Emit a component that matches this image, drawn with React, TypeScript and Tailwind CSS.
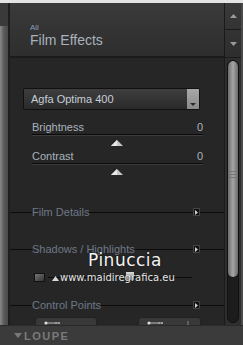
import React from "react";

const Triangle = () => (
  <svg width="12" height="6" viewBox="0 0 12 6" className="block">
    <path d="M6 0 L12 6 L0 6 Z" fill="#c8c8c8" />
    <path d="M6 0 L6 6 L0 6 Z" fill="#e8e8e8" />
  </svg>
);

const ExpandBtn = () => (
  <div className="w-[7px] h-[8px] bg-[#111] border border-[#444] flex items-center justify-center">
    <svg width="3" height="5" viewBox="0 0 3 5">
      <path d="M0 0 L3 2.5 L0 5 Z" fill="#d0d0d0" />
    </svg>
  </div>
);

const SectionRow = ({ label, className }: { label: string; className?: string }) => (
  <div className={`flex items-center h-[12px] ${className ?? ""}`}>
    <div className="w-[22px] h-px bg-[#0c0c0c]" />
    <span className="text-[11px] leading-[12px] text-[#6e7886] whitespace-nowrap">{label}</span>
    <div className="flex-1 h-px bg-[#0c0c0c]" />
    <ExpandBtn />
    <div className="w-[24px] h-px bg-[#0c0c0c]" />
  </div>
);

const SliderBlock = ({ label, className }: { label: string; className?: string }) => (
  <div className={`ml-[22px] w-[171px] ${className ?? ""}`}>
    <div className="flex justify-between h-[12px] text-[11px] leading-[12px] text-[#a9b3be]">
      <span>{label}</span>
      <span>0</span>
    </div>
    <div className="mt-[1px] h-[2px] border-t border-[#0b0b0b] border-b border-b-[#3c3c3c]" />
    <div className="mt-[4px] ml-[79px]">
      <Triangle />
    </div>
  </div>
);

export default function App() {
  return (
    <div
      className="relative w-[243px] h-[345px] overflow-hidden flex flex-col bg-[#262626]"
      style={{ fontFamily: '"Liberation Sans", Arial, sans-serif' }}
    >
      {/* top strip */}
      <div className="h-[3px] shrink-0 bg-[#e4e4e4]" />

      <div className="flex flex-1 min-h-0 overflow-hidden">
        {/* LEFT EDGE */}
        <div className="w-[10px] shrink-0 flex flex-col">
          <div className="h-[23px] shrink-0 bg-[#3a3a3a] border-r-2 border-[#1e1e1e]" />
          <div className="flex-1 bg-gradient-to-r from-[#8a8a8a] via-[#5a5a5a] to-[#4a4a4a] border-r-2 border-[#1e1e1e]" />
        </div>

        {/* MAIN PANEL */}
        <div className="flex-1 flex flex-col min-w-0">
          {/* HEADER */}
          <div className="h-[55px] shrink-0 bg-gradient-to-b from-[#3a3a3a] to-[#2e2e2e] border-b-2 border-[#1b1b1b] pl-[20px] pt-[20px]">
            <div className="text-[8px] leading-[9px] text-[#8a9bb4]">All</div>
            <div className="text-[14px] leading-[16px] text-[#a9b1bc]">Film Effects</div>
          </div>

          {/* BODY */}
          <div className="flex-1 min-h-0 overflow-hidden">
            {/* DROPDOWN */}
            <div className="mt-[30px] ml-[13px] w-[177px] h-[22px] flex border border-[#111] rounded-[2px] bg-gradient-to-b from-[#3e3e3e] to-[#2a2a2a]">
              <span className="flex-1 pl-[7px] text-[11px] leading-[20px] text-[#c6ced7]">Agfa Optima 400</span>
              <div className="w-[12px] bg-gradient-to-b from-[#a8a8a8] to-[#8a8a8a] flex items-end justify-center pb-[3px]">
                <svg width="6" height="3" viewBox="0 0 6 3">
                  <path d="M0 0 L6 0 L3 3 Z" fill="#2a2a2a" />
                </svg>
              </div>
            </div>

            <SliderBlock label="Brightness" className="mt-[11px]" />
            <SliderBlock label="Contrast" className="mt-[4px]" />

            <SectionRow label="Film Details" className="mt-[31px]" />
            <SectionRow label="Shadows / Highlights" className="mt-[25px]" />

            {/* slider row */}
            <div className="mt-[17px] h-[10px] flex items-center ml-[24px] w-[158px] relative">
              <div className="w-[11px] h-[9px] border border-[#111] bg-gradient-to-br from-[#777] to-[#333]" />
              <div className="flex-1 h-px bg-[#0c0c0c] ml-[3px]" />
              <div className="absolute left-[92px] top-0 w-[8px] h-[8px] bg-gradient-to-b from-[#ddd] to-[#888]" />
            </div>

            <SectionRow label="Control Points" className="mt-[17px]" />

            {/* buttons */}
            <div className="mt-[6px] flex ml-[25px] gap-[41px]">
              <div className="w-[62px] h-[14px] rounded-t-[3px] bg-[#383838] border border-[#222] pl-[8px] pt-[3px]">
                <svg width="18" height="4" viewBox="0 0 18 4">
                  <circle cx="2" cy="2" r="1.6" fill="#ddd" />
                  <path d="M3 2 H16 M12 1 V3 M15 1 V3" stroke="#bbb" strokeWidth="1" />
                </svg>
              </div>
              <div className="w-[63px] h-[14px] rounded-t-[3px] bg-[#383838] border border-[#222] pl-[8px] pt-[3px] flex justify-between pr-[10px]">
                <svg width="18" height="4" viewBox="0 0 18 4">
                  <circle cx="2" cy="2" r="1.6" fill="#ddd" />
                  <path d="M3 2 H16 M12 1 V3 M15 1 V3" stroke="#bbb" strokeWidth="1" />
                </svg>
                <svg width="4" height="4" viewBox="0 0 4 4">
                  <path d="M2 0 V4" stroke="#888" strokeWidth="1" />
                </svg>
              </div>
            </div>
          </div>
        </div>

        {/* SCROLLBAR */}
        <div className="w-[17px] shrink-0 flex flex-col border-l border-[#1a1a1a] bg-[#2e2e2e]">
          <div className="h-[27px] shrink-0 flex items-center justify-center border-b border-[#1a1a1a] bg-gradient-to-b from-[#3a3a3a] to-[#333]">
            <svg width="7" height="4" viewBox="0 0 7 4">
              <path d="M3.5 0 L7 4 L0 4 Z" fill="#9a9a9a" />
            </svg>
          </div>
          <div className="h-[27px] shrink-0 flex items-center justify-center bg-gradient-to-b from-[#333] to-[#2e2e2e]">
            <svg width="7" height="4" viewBox="0 0 7 4">
              <path d="M0 0 L7 0 L3.5 4 Z" fill="#9a9a9a" />
            </svg>
          </div>
          <div className="flex-1 min-h-0 px-[2px] pt-[2px] pb-[2px] border-t border-[#1a1a1a]">
            <div className="h-full rounded-[7px] bg-[#1c1c1c] border border-[#111] flex flex-col overflow-hidden">
              <div className="h-[216px] shrink-0 rounded-[7px] bg-gradient-to-r from-[#6c6c6c] via-[#a6a6a6] to-[#6a6a6a] flex flex-col items-center justify-center gap-[2px] pt-[10px]">
                <div className="w-[8px] h-px bg-[#777]" />
                <div className="w-[8px] h-px bg-[#777]" />
                <div className="w-[8px] h-px bg-[#777]" />
              </div>
            </div>
          </div>
        </div>

        {/* RIGHT EDGE */}
        <div className="w-[2px] shrink-0 bg-[#4a4a4a]" />
      </div>

      {/* LOUPE BAR */}
      <div className="h-[20px] shrink-0 bg-[#3b3b3b] border-t border-[#2a2a2a] flex items-center pl-[14px] gap-[2px]">
        <svg width="8" height="5" viewBox="0 0 8 5">
          <path d="M0 0 L8 0 L4 5 Z" fill="#7a7a7a" />
        </svg>
        <span className="text-[11px] leading-[12px] font-bold tracking-[1.5px] text-[#7a7a7a]">LOUPE</span>
      </div>

      {/* WATERMARK */}
      <div
        className="absolute left-[88px] top-[250px] text-[17px] leading-[20px] text-[#f4f4f4] tracking-[0.5px]"
        style={{ fontFamily: '"DejaVu Sans", sans-serif', textShadow: "0 0 2px #222, 0 0 1px #000" }}
      >
        Pinuccia
      </div>
      <div
        className="absolute left-[52px] top-[272px] flex items-center gap-[1px] text-[10px] leading-[12px] text-[#e8e8e8]"
        style={{ fontFamily: '"DejaVu Sans", sans-serif', textShadow: "0 0 1px #111" }}
      >
        <svg width="7" height="5" viewBox="0 0 7 5">
          <path d="M3.5 0 L7 5 L0 5 Z" fill="#d8d8d8" />
        </svg>
        <span>www.maidiregrafica.eu</span>
      </div>
    </div>
  );
}
